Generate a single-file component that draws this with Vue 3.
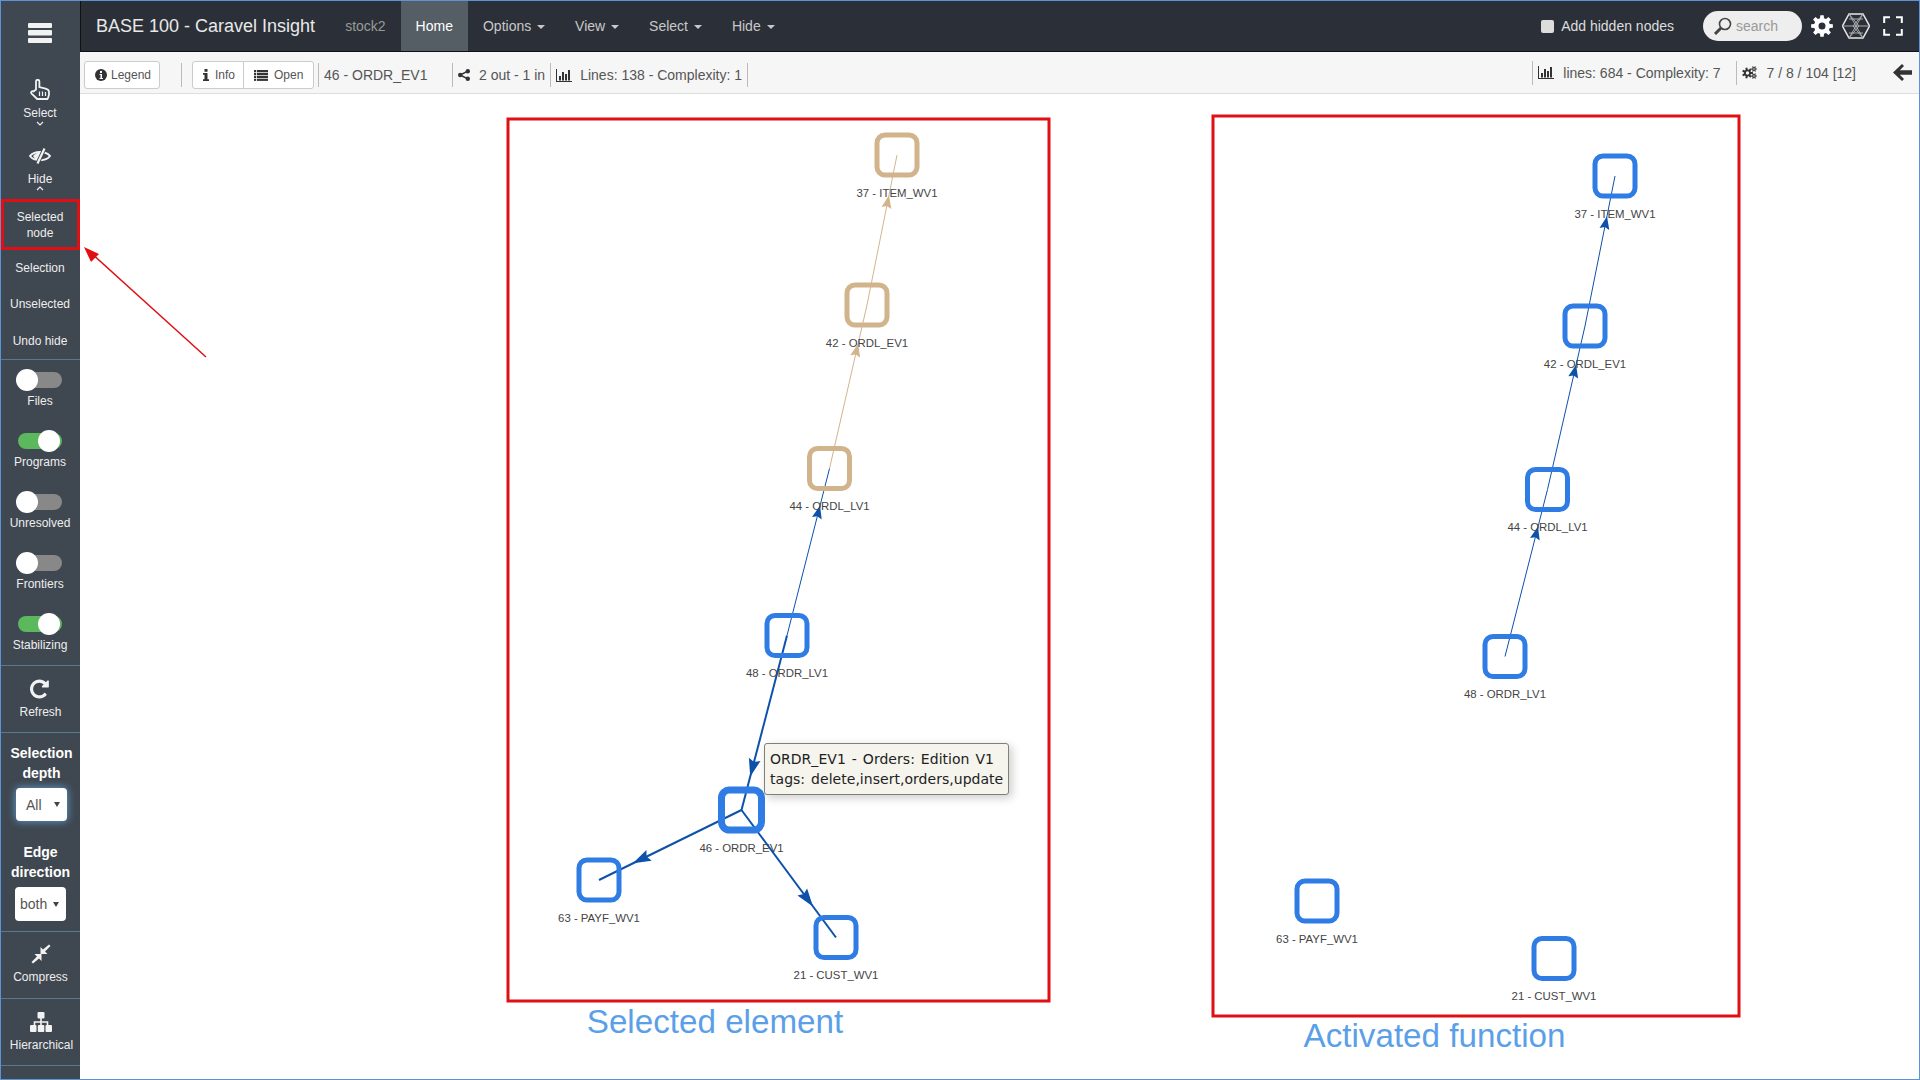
<template>
  <div class="app">
    <aside class="sidebar">
      <div class="burger">
        <svg width="24" height="20" viewBox="0 0 24 20"><rect y="0" width="24" height="5" rx="1" /><rect y="7" width="24" height="5.5" rx="1" /><rect y="15" width="24" height="5" rx="1" /></svg>
      </div>
      <div class="tool tool-select">
        <svg width="20" height="21" viewBox="0 0 20 21" class="line-ic"><path d="M6 10.500V2.500a1.700 1.700 0 0 1 3.400 0V8l6.200 1.600c1.900.5 3.400 1.500 3.400 3.400v2.300c0 1.100-.4 2-.8 3l-.8 1.700H7.200L1.600 14.600c-1.300-1.400.5-3.200 2-2.200z" /><path d="M9.500 12.500v4.500M12.500 12.500v4.500M15.500 13v4" stroke-width="1.200" /></svg>
        <span>Select</span>
        <svg class="chev" width="8" height="5" viewBox="0 0 8 5"><path d="M1 1l3 3 3-3" /></svg>
      </div>
      <div class="tool tool-hide">
        <svg width="22" height="16" viewBox="0 0 22 16">
          <path d="M1 8C5 2.500 17 2.500 21 8 17 13.500 5 13.500 1 8Z" fill="none" stroke="#f2f2f2" stroke-width="2" />
          <path d="M4 8C6 5.500 9 4.500 12.500 4.200L8 12C6.500 11 5 10 4 8Z" />
          <path d="M15.500 0.500L8.500 15.500" fill="none" stroke="#3f4750" stroke-width="4" />
          <path d="M15.500 0.500L8.500 15.500" fill="none" stroke="#f2f2f2" stroke-width="2.200" />
        </svg>
        <span>Hide</span>
        <svg class="chev" width="8" height="5" viewBox="0 0 8 5"><path d="M1 4l3-3 3 3" /></svg>
      </div>
      <div class="sub-item boxed">Selected<br />node</div>
      <div class="sub-item">Selection</div>
      <div class="sub-item">Unselected</div>
      <div class="sub-item last">Undo hide</div>

      <div v-for="(t, i) in toggles" :key="t.name" class="switch-row" :class="{ last: i === toggles.length - 1 }">
        <div class="switch" :class="{ on: t.on }"><i></i></div>
        <span>{{ t.name }}</span>
      </div>

      <div class="tool tool-plain tool-refresh bordered">
        <svg width="22" height="22" viewBox="0 0 1792 1792"><path d="M1536 256v448q0 26-19 45t-45 19h-448q-42 0-59-40-17-39 14-69l138-138q-148-137-349-137-104 0-198.500 40.500t-163.500 109.500-109.500 163.500-40.500 198.500 40.500 198.500 109.500 163.500 163.500 109.500 198.500 40.500q119 0 225-52t179-147q7-10 23-12 15 0 25 9l137 138q9 8 9.500 20.500t-7.500 22.500q-109 132-264 204.500t-327 72.500q-156 0-298-61t-245-164-164-245-61-298 61-298 164-245 245-164 298-61q147 0 284.500 55.500t244.500 156.500l130-129q29-31 70-14 39 17 39 59z" /></svg>
        <span>Refresh</span>
      </div>

      <div class="selects bordered">
        <b>Selection<br />depth</b>
        <div class="fake-select focus"><span>All</span><i></i></div>
        <b class="second">Edge<br />direction</b>
        <div class="fake-select shifted"><span>both</span><i></i></div>
      </div>

      <div class="tool tool-plain tool-compress bordered">
        <svg width="20" height="20" viewBox="0 0 20 20"><path d="M2 19.500L.5 18l5.500-5.500-2.500-2.500h7v7L8 14.500zM18 .5L19.500 2 14 7.500l2.500 2.500h-7V3L12 5.500z" /></svg>
        <span>Compress</span>
      </div>
      <div class="tool tool-plain tool-tree bordered">
        <svg width="22" height="20" viewBox="0 0 22 20"><rect x="7.500" y="0" width="7" height="6.500" rx="1" /><rect x="0" y="13" width="6.500" height="7" rx="1" /><rect x="7.800" y="13" width="6.500" height="7" rx="1" /><rect x="15.500" y="13" width="6.500" height="7" rx="1" /><path d="M10.200 6h1.600v3.200h6.500V13h-1.600V10.800h-4.900V13h-1.600V10.800H5.300V13H3.700V9.200h6.500z" /></svg>
        <span>Hierarchical</span>
      </div>
    </aside>

    <div class="main">
      <nav class="navbar">
        <span class="brand">BASE 100 - Caravel Insight</span>
        <span class="project">stock2</span>
        <a class="nav-link active">Home</a>
        <a v-for="m in menus" :key="m" class="nav-link">{{ m }} <i class="caret"></i></a>
        <label class="hidden-nodes"><i class="check"></i>Add hidden nodes</label>
        <div class="search">
          <svg width="20" height="20" viewBox="0 0 20 20" fill="none" stroke="#444"><circle cx="12" cy="8" r="5.500" stroke-width="1.600" /><path d="M8 12l-6 6" stroke-width="3" /></svg>
          <span>search</span>
        </div>
        <svg class="nav-cog" width="22" height="22" viewBox="0 0 22 22"><path fill="#fff" fill-rule="evenodd" :d="gear(11, 11, 8, 11, 8, 3.500)" /></svg>
        <svg class="nav-logo" width="28" height="26" viewBox="0 0 28 26" fill="none" stroke="#aaa" stroke-width="1"><path d="M7 1h14l6.500 12L21 25H7L.5 13z" stroke="#e8e8e8" stroke-width="1.500" /><path d="M7 1l14 24M21 1L7 25M.5 13h27M7 1l10 12L7 25M21 1L11 13l10 12M7 6h14M7 20h14" /></svg>
        <svg class="nav-full" width="20" height="20" viewBox="0 0 20 20" fill="none" stroke="#fff" stroke-width="2"><path d="M1.200 7V1.200H7M13 1.200h5.800V7M18.800 13v5.800H13M7 18.800H1.200V13" /></svg>
      </nav>

      <div class="toolbar">
        <div class="toolbar-left">
          <button class="btn legend">
            <svg width="12" height="12" viewBox="0 0 12 12"><circle cx="6" cy="6" r="6" fill="#333" /><rect x="5" y="2" width="2" height="2" fill="#fff" /><path d="M4.500 5H7v4h1v1H4.500V9h1V6h-1z" fill="#fff" /></svg>
            Legend
          </button>
          <i class="sep sep-a"></i>
          <div class="btn-group">
            <button class="btn info">
              <svg width="6" height="12" viewBox="0 0 6 12"><rect x="1.500" y="0" width="3" height="2.800" fill="#333" /><path d="M0 4h4.500v6.300H6V12H0v-1.700h1.500V5.700H0z" fill="#333" /></svg>
              Info
            </button>
            <button class="btn open">
              <svg width="14" height="11" viewBox="0 0 14 11" fill="#333"><rect width="2.200" height="2.200" /><rect y="2.900" width="2.200" height="2.200" /><rect y="5.800" width="2.200" height="2.200" /><rect y="8.700" width="2.200" height="2.200" /><rect x="3" width="11" height="2.200" /><rect x="3" y="2.900" width="11" height="2.200" /><rect x="3" y="5.800" width="11" height="2.200" /><rect x="3" y="8.700" width="11" height="2.200" /></svg>
              Open
            </button>
          </div>
          <i class="sep sep-b"></i>
          <span class="selected-name">46 - ORDR_EV1</span>
          <i class="sep"></i>
          <span class="stat">
            <svg width="12" height="12" viewBox="0 0 12 12" fill="#333"><circle cx="9.800" cy="2.200" r="2.200" /><circle cx="2.200" cy="6" r="2.200" /><circle cx="9.800" cy="9.800" r="2.200" /><path d="M2.200 6l7.600-3.800M2.200 6l7.600 3.800" stroke="#333" stroke-width="1.500" /></svg>
            2 out - 1 in
          </span>
          <i class="sep sep-tight"></i>
          <span class="stat stat-lines">
            <svg width="16" height="13" viewBox="0 0 16 13" fill="#333"><path d="M0 0h1v12h15v1H0z" /><rect x="3" y="7" width="2" height="4.500" /><rect x="6" y="3" width="2" height="8.500" /><rect x="9" y="5" width="2" height="6.500" /><rect x="12" y="1" width="2" height="10.500" /></svg>
            Lines: 138 - Complexity: 1
          </span>
          <i class="sep sep-end"></i>
        </div>
        <div class="toolbar-right">
          <i class="sep"></i>
          <span class="stat">
            <svg width="16" height="13" viewBox="0 0 16 13" fill="#333"><path d="M0 0h1v12h15v1H0z" /><rect x="3" y="7" width="2" height="4.500" /><rect x="6" y="3" width="2" height="8.500" /><rect x="9" y="5" width="2" height="6.500" /><rect x="12" y="1" width="2" height="10.500" /></svg>
            lines: 684 - Complexity: 7
          </span>
          <i class="sep sep-wide"></i>
          <span class="stat">
            <svg width="15" height="13" viewBox="0 0 15 13" fill="#333"><path fill-rule="evenodd" :d="gear(5.500, 7, 3.600, 5.500, 7, 1.700)" /><path fill-rule="evenodd" :d="gear(12, 3, 1.800, 3, 6, 0.800)" /><path fill-rule="evenodd" :d="gear(12, 10, 1.800, 3, 6, 0.800)" /></svg>
            7 / 8 / 104 [12]
          </span>
          <svg class="back" width="19" height="17" viewBox="0 0 19 17" fill="#333"><path d="M9 0l2 2-4.200 4.300H19v4.400H6.800L11 15l-2 2-9-8.500z" /></svg>
        </div>
      </div>

      <div class="canvas">
        <svg class="graph" viewBox="80 94 1839 985" width="1839" height="985">
          <rect class="frame" x="508" y="119" width="541" height="882" />
          <rect class="frame" x="1213" y="116" width="526" height="900" />
          <path class="frame-arrow" d="M206 357L90 252" />
          <path d="M84 247l15 7-8 8z" fill="#e00f14" />

          <g v-for="e in edges" :key="e.key">
            <line :x1="e.x1" :y1="e.y1" :x2="e.x2" :y2="e.y2" :stroke="e.color" :stroke-width="e.width" />
            <polygon :points="e.head" :fill="e.color" />
          </g>
          <g v-for="n in nodes" :key="n.key">
            <rect
              :x="n.x - 20" :y="n.y - 20" width="40" height="40" rx="8"
              fill="none" :stroke="n.color" :stroke-width="n.sw"
            />
            <text class="node-label" :x="n.x" :y="n.y + 41.5" text-anchor="middle">{{ n.label }}</text>
          </g>

          <text class="caption" x="715" y="1033" text-anchor="middle">Selected element</text>
          <text class="caption" x="1434.500" y="1047" text-anchor="middle">Activated function</text>
        </svg>
        <div class="tooltip">ORDR_EV1 - Orders: Edition V1<br />tags: delete,insert,orders,update</div>
      </div>
    </div>
  </div>
</template>

<script setup>
const toggles = [
  { name: "Files", on: false },
  { name: "Programs", on: true },
  { name: "Unresolved", on: false },
  { name: "Frontiers", on: false },
  { name: "Stabilizing", on: true },
];
const menus = ["Options", "View", "Select", "Hide"];

const BLUE = "#2f7ce4";
const TAN = "#d2b48c";
const EDGE = "#0d51ab";

const chain = [
  { id: 37, label: "37 - ITEM_WV1", x: 897, y: 155 },
  { id: 42, label: "42 - ORDL_EV1", x: 867, y: 305 },
  { id: 44, label: "44 - ORDL_LV1", x: 829.5, y: 468.5 },
  { id: 48, label: "48 - ORDR_LV1", x: 787, y: 635.5 },
  { id: 63, label: "63 - PAYF_WV1", x: 599, y: 880 },
  { id: 21, label: "21 - CUST_WV1", x: 836, y: 937.5 },
];
const center = { id: 46, label: "46 - ORDR_EV1", x: 741.5, y: 810 };

const DX = 718;
const DY = 21;

const nodes = [
  ...chain.map((n) => ({
    ...n,
    key: "a" + n.id,
    color: [37, 42, 44].includes(n.id) ? TAN : BLUE,
    sw: 5,
  })),
  { ...center, key: "a46", color: BLUE, sw: 7 },
  ...chain.map((n) => ({ ...n, key: "b" + n.id, x: n.x + DX, y: n.y + DY, color: BLUE, sw: 5 })),
];

// arrow head: tip sits on the edge, len and half width set by edge weight
function makeEdge(key, a, b, tip, color, width, len, half) {
  const dx = b.x - a.x;
  const dy = b.y - a.y;
  const d = Math.hypot(dx, dy);
  const ux = dx / d;
  const uy = dy / d;
  const tx = a.x + ux * tip;
  const ty = a.y + uy * tip;
  const bx = tx - ux * len;
  const by = ty - uy * len;
  const nx = tx - ux * len * 0.85;
  const ny = ty - uy * len * 0.85;
  const head = [
    [tx, ty],
    [bx - uy * half, by + ux * half],
    [nx, ny],
    [bx + uy * half, by - ux * half],
  ].map((p) => p.map((v) => v.toFixed(1)).join(",")).join(" ");
  return { key, x1: a.x, y1: a.y, x2: b.x, y2: b.y, color, width, head };
}

const byId = Object.fromEntries(chain.map((n) => [n.id, n]));
const shift = (n) => ({ x: n.x + DX, y: n.y + DY });

const edges = [
  makeEdge("l1", byId[42], byId[37], 112, TAN, 1, 13, 5),
  makeEdge("l2", byId[44], byId[42], 128, TAN, 1, 13, 5),
  makeEdge("l3", byId[48], byId[44], 134, EDGE, 1, 13, 5),
  makeEdge("l4", byId[48], center, 146, EDGE, 2, 18, 6),
  makeEdge("l5", center, byId[63], 121, EDGE, 2, 18, 6),
  makeEdge("l6", center, byId[21], 120, EDGE, 2, 18, 6),
  makeEdge("r1", shift(byId[42]), shift(byId[37]), 112, EDGE, 1, 13, 5),
  makeEdge("r2", shift(byId[44]), shift(byId[42]), 128, EDGE, 1, 13, 5),
  makeEdge("r3", shift(byId[48]), shift(byId[44]), 134, EDGE, 1, 13, 5),
];

// gear outline as a path, with a round hole in the middle
function gear(cx, cy, r1, r2, teeth, hole) {
  const step = (Math.PI * 2) / teeth;
  let d = "";
  for (let i = 0; i < teeth; i++) {
    const a = i * step;
    const pts = [
      [r1, a - step * 0.32],
      [r2, a - step * 0.2],
      [r2, a + step * 0.2],
      [r1, a + step * 0.32],
    ];
    pts.forEach(([r, t], j) => {
      const x = (cx + r * Math.cos(t)).toFixed(2);
      const y = (cy + r * Math.sin(t)).toFixed(2);
      d += (i === 0 && j === 0 ? "M" : "L") + x + " " + y;
    });
  }
  d += "Z";
  d += `M${cx - hole} ${cy}a${hole} ${hole} 0 1 0 ${hole * 2} 0a${hole} ${hole} 0 1 0 ${-hole * 2} 0Z`;
  return d;
}
</script>

<style>
html, body {
  margin: 0;
  background: #fff;
}
</style>

<style scoped>
.app {
  box-sizing: border-box;
  width: 1920px;
  height: 1080px;
  border: 1px solid #5a93d6;
  display: flex;
  overflow: hidden;
  font-family: "Liberation Sans", Arial, sans-serif;
  color: #555;
  font-size: 14px;
}

/* sidebar */
.sidebar {
  width: 79px;
  flex: none;
  box-sizing: border-box;
  padding-right: 1px;
  background: #3f4750;
  color: #eee;
  font-size: 12px;
  text-align: center;
}
.sidebar svg {
  fill: #f2f2f2;
  display: block;
}
.burger {
  height: 64px;
  display: flex;
  align-items: center;
  justify-content: center;
  box-sizing: border-box;
}
.tool {
  display: flex;
  flex-direction: column;
  align-items: center;
  box-sizing: border-box;
}
.tool span {
  line-height: 14px;
}
.tool-select {
  height: 67px;
  padding-top: 14px;
}
.tool-select span {
  margin-top: 6px;
}
.tool-hide {
  height: 67px;
  padding-top: 16px;
}
.tool-hide span {
  margin-top: 8px;
}
.sidebar .line-ic {
  fill: none;
  stroke: #f2f2f2;
  stroke-width: 1.8;
}
.sidebar .chev {
  fill: none;
  stroke: #eee;
  stroke-width: 1.2;
  margin-top: 1px;
}
.tool-hide .chev {
  margin-top: 0;
}
.tool-plain {
  height: 67px;
  padding-top: 12px;
}
.tool-refresh span {
  margin-top: 5px;
}
.tool-compress span {
  margin-top: 6px;
}
.tool-tree svg {
  margin-top: 1px;
}
.tool-tree span {
  margin-top: 6px;
  margin-left: 2px;
}
.bordered {
  border-bottom: 1px solid #557a96;
  margin-right: -1px;
}
.sub-item {
  height: 36px;
  line-height: 16px;
  display: flex;
  align-items: center;
  justify-content: center;
}
.sub-item.boxed {
  height: 51px;
  margin-left: 0;
  margin-right: -1px;
  padding-right: 1px;
  border: 3px solid #e00f14;
  box-sizing: border-box;
}
.sub-item.last {
  height: 37px;
  margin-right: -1px;
  padding-right: 1px;
  border-bottom: 1px solid #557a96;
}
.switch-row {
  height: 61px;
  box-sizing: border-box;
  padding-top: 9px;
  display: flex;
  flex-direction: column;
  align-items: center;
}
.switch-row.last {
  height: 62px;
  margin-right: -1px;
  padding-right: 1px;
  border-bottom: 1px solid #557a96;
}
.switch-row span {
  line-height: 14px;
  margin-top: 3px;
}
.switch {
  position: relative;
  width: 44px;
  height: 16px;
  margin: 3px 0;
  border-radius: 8px;
  background: #888;
}
.switch i {
  position: absolute;
  left: -2px;
  top: -3px;
  width: 22px;
  height: 22px;
  border-radius: 50%;
  background: #fff;
}
.switch.on {
  background: #5cb85c;
}
.switch.on i {
  left: 20px;
}
.selects {
  height: 199px;
  box-sizing: border-box;
  padding-top: 10px;
  font-size: 14px;
  line-height: 20px;
  color: #fff;
  display: flex;
  flex-direction: column;
  align-items: center;
}
.selects b {
  margin-left: 2px;
}
.selects b.second {
  margin-left: 0;
  margin-top: 21px;
}
.fake-select {
  box-sizing: border-box;
  width: 51px;
  height: 33px;
  margin-top: 5px;
  margin-left: 2px;
  background: #fff;
  border-radius: 4px;
  color: #555;
  display: flex;
  align-items: center;
  justify-content: space-between;
  padding: 0 7px 0 5px;
}
.fake-select.focus {
  box-shadow: 0 0 8px rgba(102, 175, 233, 0.9);
  padding-left: 10px;
}
.fake-select.shifted {
  height: 34px;
  margin-top: 5px;
  margin-left: 0;
}
.fake-select i {
  width: 0;
  height: 0;
  border-left: 3px solid transparent;
  border-right: 3px solid transparent;
  border-top: 5px solid #444;
}

/* top bar */
.main {
  flex: 1;
  min-width: 0;
  display: flex;
  flex-direction: column;
}
.navbar {
  height: 51px;
  flex: none;
  box-sizing: border-box;
  background: #2b3038;
  border-bottom: 1px solid #111;
  border-left: 1px solid #111;
  display: flex;
  align-items: center;
  color: #ccc;
}
.brand {
  font-size: 18px;
  color: #e8e8e8;
  margin-left: 15px;
}
.project {
  color: #999;
  margin-left: 30px;
  margin-right: 15px;
}
.nav-link {
  height: 50px;
  line-height: 50px;
  padding: 0 15px;
  color: #c8c8c8;
}
.nav-link.active {
  background: #555e64;
  color: #fff;
}
.caret {
  display: inline-block;
  margin-left: 2px;
  vertical-align: middle;
  border-top: 4px solid;
  border-left: 4px solid transparent;
  border-right: 4px solid transparent;
}
.hidden-nodes {
  margin-left: auto;
  display: flex;
  align-items: center;
  color: #ddd;
}
.check {
  width: 13px;
  height: 13px;
  background: #ddd;
  border-radius: 2px;
  margin-right: 7px;
}
.search {
  margin-left: 29px;
  width: 99px;
  height: 30px;
  box-sizing: border-box;
  background: #eee;
  border-radius: 15px;
  padding-left: 10px;
  display: flex;
  align-items: center;
  color: #999;
}
.search span {
  margin-left: 3px;
}
.nav-cog {
  margin-left: 9px;
}
.nav-logo {
  margin-left: 9px;
}
.nav-full {
  margin-left: 13px;
  margin-right: 16px;
}

/* second bar */
.toolbar {
  height: 42px;
  flex: none;
  box-sizing: border-box;
  background: #f6f6f6;
  border-bottom: 1px solid #ddd;
  display: flex;
  align-items: center;
  padding-left: 4px;
}
.toolbar-left {
  display: flex;
  align-items: center;
  margin-top: 5px;
}
.btn {
  box-sizing: border-box;
  height: 28px;
  background: #fff;
  border: 1px solid #ccc;
  border-radius: 3px;
  font: 12px "Liberation Sans", Arial, sans-serif;
  color: #555;
  display: flex;
  align-items: center;
  padding: 0;
}
.btn.legend {
  width: 76px;
  padding-left: 10px;
  gap: 4px;
}
.btn-group {
  display: flex;
}
.btn.info {
  width: 52px;
  padding-left: 10px;
  gap: 6px;
  border-radius: 3px 0 0 3px;
}
.btn.open {
  width: 71px;
  margin-left: -1px;
  padding-left: 10px;
  gap: 6px;
  border-radius: 0 3px 3px 0;
}
.sep {
  width: 1px;
  height: 24px;
  background: #bbb;
  flex: none;
}
.sep-a {
  margin: 0 10px 0 21px;
}
.sep-b {
  margin: 0 5px 0 4px;
}
.sep-tight {
  margin: 0 0 0 5px;
}
.sep-end {
  margin-left: 5px;
}
.selected-name {
  width: 128px;
  flex: none;
}
.stat {
  display: flex;
  align-items: center;
  gap: 9px;
  margin-left: 5px;
  white-space: nowrap;
}
.stat-lines {
  gap: 8px;
}
.toolbar-right {
  margin-left: auto;
  display: flex;
  align-items: center;
}
.sep-wide {
  margin-left: 16px;
}
.back {
  margin-left: 37px;
  margin-right: 7px;
}

/* graph area */
.canvas {
  position: relative;
  flex: 1;
  overflow: hidden;
  background: #fff;
}
.graph {
  position: absolute;
  left: 0;
  top: 0;
  display: block;
}
.frame {
  fill: none;
  stroke: #e00f14;
  stroke-width: 3;
}
.frame-arrow {
  stroke: #e00f14;
  stroke-width: 1.5;
  fill: none;
}
.node-label {
  font: 11.4px "Liberation Sans", Arial, sans-serif;
  fill: #444;
}
.caption {
  font: 33.2px "Liberation Sans", Arial, sans-serif;
  fill: #5b9fe9;
}
.tooltip {
  position: absolute;
  left: 684px;
  top: 649px;
  box-sizing: border-box;
  width: 245px;
  height: 52px;
  padding: 5px 5px;
  font: 14px/20px "DejaVu Sans", Verdana, sans-serif;
  word-spacing: 1.5px;
  letter-spacing: 0.03px;
  white-space: nowrap;
  color: #222;
  background: #f5f4ed;
  border: 1px solid #808074;
  border-radius: 3px;
  box-shadow: 3px 3px 10px rgba(0, 0, 0, 0.2);
}
</style>
